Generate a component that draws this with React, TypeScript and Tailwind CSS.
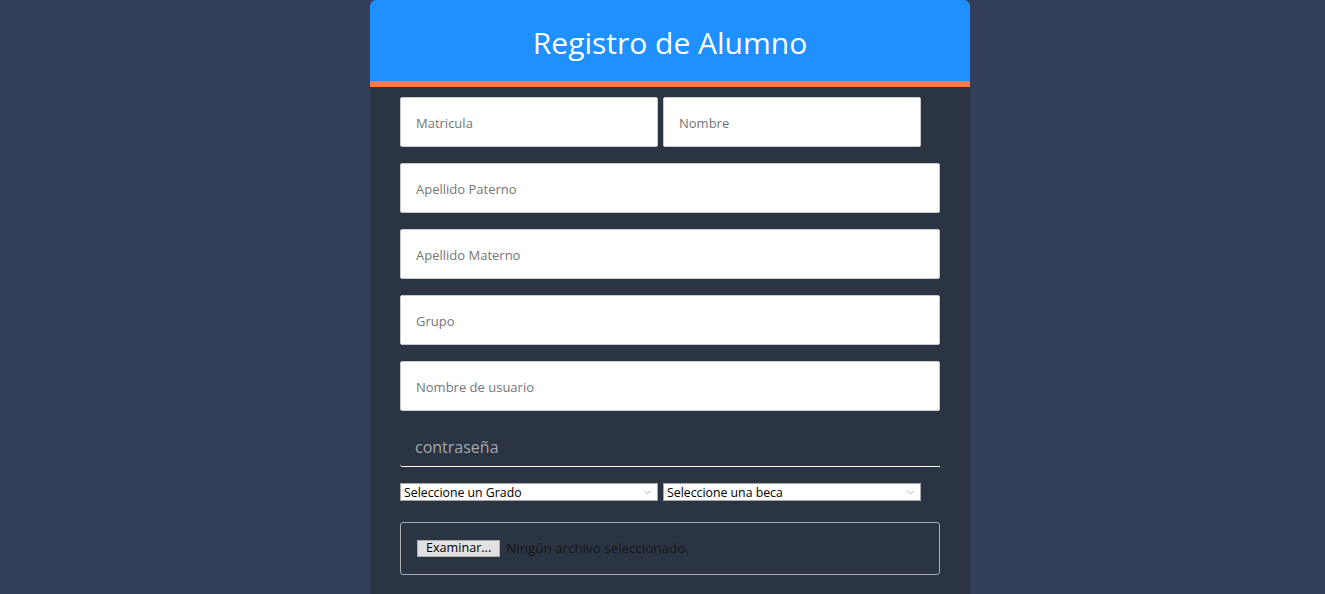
import { ChevronDown } from 'lucide-react';

const font = { fontFamily: '"Open Sans", "Noto Sans", sans-serif' };

function Field({ placeholder, className = 'w-[540px]' }: { placeholder: string; className?: string }) {
  return (
    <div className={`${className} h-[50px] bg-white border border-[#c9c9c9] rounded-[2px] flex items-center pl-[15px] pt-[3px] text-[13px] text-[#757575]`}>
      {placeholder}
    </div>
  );
}

function FakeSelect({ label }: { label: string }) {
  return (
    <div className="w-[258px] h-[18px] bg-white border border-[#a6a6a6] flex items-center justify-between pl-[3px] pr-[4px] text-[12.3px] text-black leading-none">
      <span className="pt-[3px]">{label}</span>
      <ChevronDown size={11} strokeWidth={1.5} className="text-[#8a8a8a]" />
    </div>
  );
}

export default function App() {
  return (
    <div className="min-h-screen bg-[#333f58] flex justify-center pl-[15px]" style={font}>
      <div className="w-[600px] bg-[#2b3443] rounded-t-[6px] overflow-hidden pb-10">
        <div className="h-[87px] bg-[#1e90ff] border-b-[6px] border-[#f7794e] flex items-center justify-center pt-[4px]">
          <h1 className="text-[30px] text-white font-normal">Registro de Alumno</h1>
        </div>

        <div className="px-[30px] pt-[10px] flex flex-col">
          <div className="flex gap-[5px]">
            <Field placeholder="Matricula" className="w-[258px]" />
            <Field placeholder="Nombre" className="w-[258px]" />
          </div>
          <div className="flex flex-col gap-[16px] mt-[16px]">
            <Field placeholder="Apellido Paterno" />
            <Field placeholder="Apellido Materno" />
            <Field placeholder="Grupo" />
            <Field placeholder="Nombre de usuario" />
          </div>

          <div className="mt-[16px] w-[540px] h-[40px] border-b border-white rounded-bl-[3px] flex items-center pl-[15px] text-[16px] text-[#a3a7ae]">
            contraseña
          </div>

          <div className="flex gap-[5px] mt-[16px]">
            <FakeSelect label="Seleccione un Grado" />
            <FakeSelect label="Seleccione una beca" />
          </div>

          <div className="mt-[21px] w-[540px] h-[53px] border border-[#a9adb3] rounded-[3px] flex items-center pl-[16px] gap-[6px] text-[13.4px]">
            <div className="h-[17px] px-[8px] bg-[#e1e1e1] border border-[#adadad] flex items-center text-[12.6px] text-black leading-none">
              Examinar...
            </div>
            <span className="text-[#141414]">Ningún archivo seleccionado.</span>
          </div>
        </div>
      </div>
    </div>
  );
}
